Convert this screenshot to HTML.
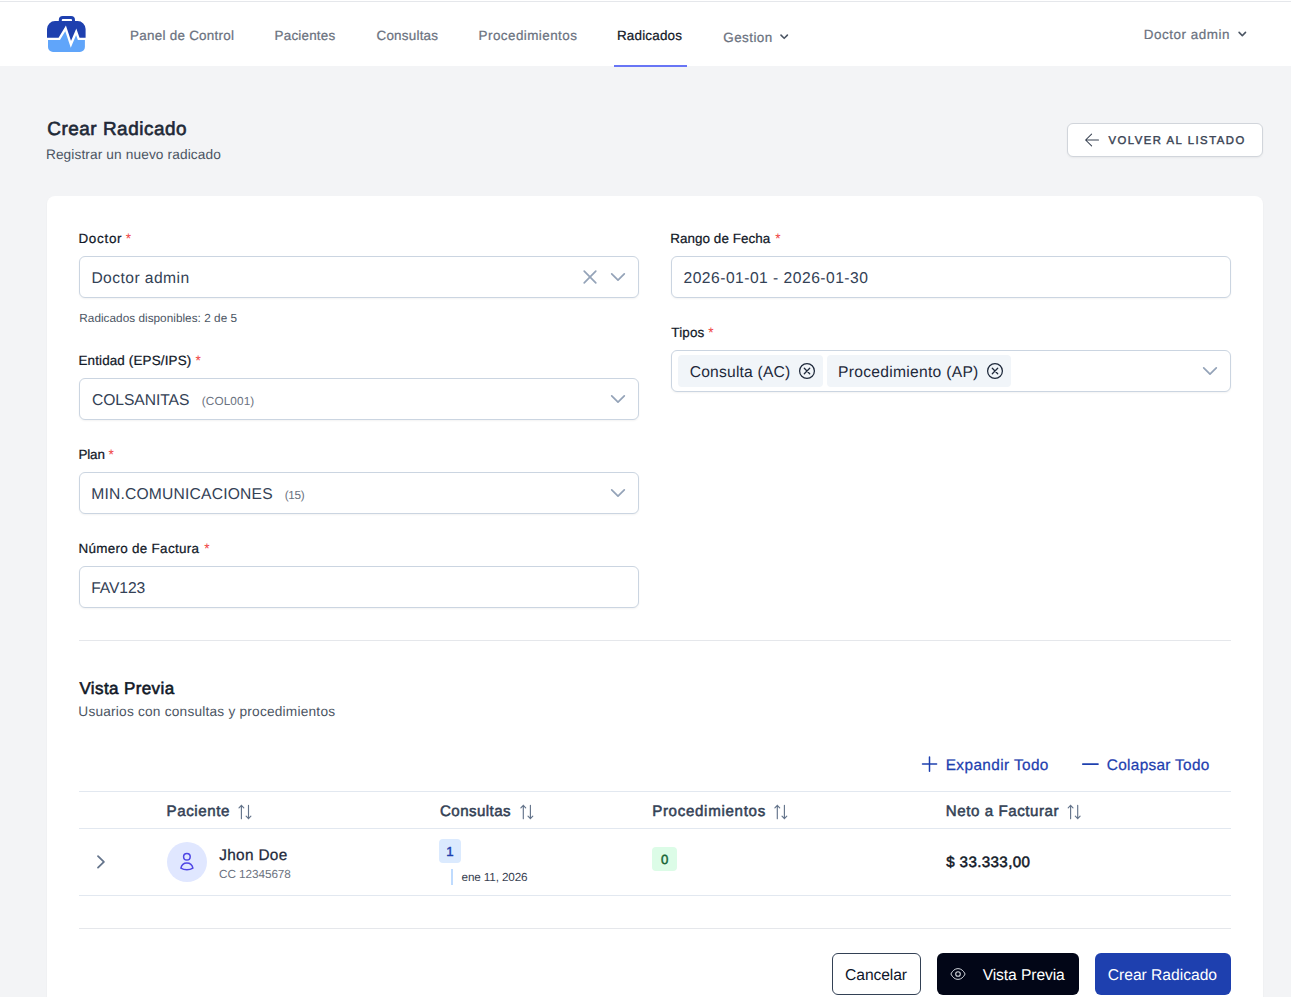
<!DOCTYPE html>
<html lang="es">
<head>
<meta charset="utf-8">
<title>Crear Radicado</title>
<style>
*{box-sizing:border-box;margin:0;padding:0}
html,body{width:1291px;height:997px;overflow:hidden;background:#f3f4f6;font-family:"Liberation Sans",sans-serif}
#root{position:relative;width:1291px;height:997px;overflow:hidden}
.a{position:absolute}
.t{position:absolute;white-space:pre;text-rendering:geometricPrecision}
.inp{position:absolute;height:42px;width:560px;background:#fff;border:1px solid #cbd5e1;border-radius:6px;box-shadow:0 1px 2px 0 rgba(18,18,23,.05)}
.hr{position:absolute;height:1px;left:79px;width:1152px}
svg{position:absolute;overflow:visible}
</style>
</head>
<body>
<div id="root">
<div class="a" style="left:0;top:0;width:1291px;height:66px;background:#fff"></div>
<div class="a" style="left:0;top:1px;width:1291px;height:1px;background:#e5e7eb"></div>
<div class="a" style="left:614px;top:65px;width:73px;height:2px;background:#6875f5"></div>
<div class="a" style="left:47px;top:196px;width:1216px;height:820px;background:#fff;border-radius:8px;box-shadow:0 1px 2px 0 rgba(0,0,0,.05)"></div>
<div class="a" style="left:1067px;top:123px;width:196px;height:34px;background:#fff;border:1px solid #d1d5db;border-radius:6px;box-shadow:0 1px 2px 0 rgba(0,0,0,.05)"></div>
<div class="inp" style="left:79px;top:256px"></div>
<div class="inp" style="left:79px;top:378px"></div>
<div class="inp" style="left:79px;top:472px"></div>
<div class="inp" style="left:79px;top:566px"></div>
<div class="inp" style="left:671px;top:256px"></div>
<div class="inp" style="left:671px;top:350px"></div>
<div class="a" style="left:678px;top:355px;width:145px;height:32px;background:#f1f5f9;border-radius:4px"></div>
<div class="a" style="left:827px;top:355px;width:184px;height:32px;background:#f1f5f9;border-radius:4px"></div>
<div class="hr" style="top:640px;background:#e5e7eb"></div>
<div class="hr" style="top:791px;background:#e2e8f0"></div>
<div class="hr" style="top:828px;background:#e2e8f0"></div>
<div class="hr" style="top:895px;background:#e2e8f0"></div>
<div class="hr" style="top:928px;background:#e5e7eb"></div>
<div class="a" style="left:167px;top:842px;width:40px;height:40px;border-radius:50%;background:#e0e7ff"></div>
<div class="a" style="left:439px;top:839px;width:22px;height:24px;border-radius:4px;background:#dbeafe"></div>
<div class="a" style="left:451px;top:869px;width:2px;height:16px;background:#bfdbfe"></div>
<div class="a" style="left:652px;top:847px;width:25px;height:24px;border-radius:4px;background:#dcfce7"></div>
<div class="a" style="left:832px;top:953px;width:89px;height:42px;border:1px solid #334155;border-radius:6px;background:#fff"></div>
<div class="a" style="left:937px;top:953px;width:142px;height:42px;border-radius:6px;background:#020617"></div>
<div class="a" style="left:1095px;top:953px;width:136px;height:42px;border-radius:6px;background:#1e40af"></div>

<svg class="a" style="left:0;top:0" width="1291" height="997" viewBox="0 0 1291 997">
<g>
<path d="M47 38.9V29.1a8 8 0 0 1 8-8H77.6a8 8 0 0 1 8 8V38.9H78.7L76.2 31.8L70.9 44.3L65.6 28.3L59.3 38.9Z" fill="#1e40af"/>
<path d="M48 38.9H59.3L65.6 28.3L70.9 44.3L76.2 31.8L78.7 38.9H84.9V46.9a5 5 0 0 1-5 5H53a5 5 0 0 1-5-5Z" fill="#60a5fa"/>
<path d="M46.5 38.9H59.3L65.6 28.3L70.9 44.3L76.2 31.8L78.7 38.9H86.2" fill="none" stroke="#fff" stroke-width="2.4" stroke-linejoin="miter" stroke-miterlimit="10"/>
<path d="M60.3 22V20.05a2.5 2.5 0 0 1 2.5-2.5H71a2.5 2.5 0 0 1 2.5 2.5V22" fill="none" stroke="#1e40af" stroke-width="3"/>
</g>
<svg x="776.2" y="28.7" width="16" height="16" viewBox="0 0 20 20"><path fill="#4b5563" fill-rule="evenodd" d="M5.293 7.293a1 1 0 011.414 0L10 10.586l3.293-3.293a1 1 0 111.414 1.414l-4 4a1 1 0 01-1.414 0l-4-4a1 1 0 010-1.414z" clip-rule="evenodd"/></svg>
<svg x="1234.3" y="26.0" width="16" height="16" viewBox="0 0 20 20"><path fill="#4b5563" fill-rule="evenodd" d="M5.293 7.293a1 1 0 011.414 0L10 10.586l3.293-3.293a1 1 0 111.414 1.414l-4 4a1 1 0 01-1.414 0l-4-4a1 1 0 010-1.414z" clip-rule="evenodd"/></svg>
<path d="M1098.5 140H1085.6M1091.6 134.1L1085.6 140L1091.6 145.9" fill="none" stroke="#374151" stroke-width="1.05" stroke-linecap="round" stroke-linejoin="round"/>
<path d="M584.2 271.2L595.8 282.8M595.8 271.2L584.2 282.8" stroke="#94a3b8" stroke-width="1.7" stroke-linecap="round"/>
<path d="M611.70 273.80L618.00 280.10L624.30 273.80" fill="none" stroke="#94a3b8" stroke-width="1.7" stroke-linecap="round" stroke-linejoin="round"/>
<path d="M611.70 395.80L618.00 402.10L624.30 395.80" fill="none" stroke="#94a3b8" stroke-width="1.7" stroke-linecap="round" stroke-linejoin="round"/>
<path d="M611.70 489.80L618.00 496.10L624.30 489.80" fill="none" stroke="#94a3b8" stroke-width="1.7" stroke-linecap="round" stroke-linejoin="round"/>
<path d="M1203.70 367.80L1210.00 374.10L1216.30 367.80" fill="none" stroke="#94a3b8" stroke-width="1.7" stroke-linecap="round" stroke-linejoin="round"/>
<circle cx="807" cy="371" r="7.4" fill="none" stroke="#1e293b" stroke-width="1.25"/><path d="M804.3 368.3L809.7 373.7M809.7 368.3L804.3 373.7" stroke="#1e293b" stroke-width="1.3" stroke-linecap="round"/>
<circle cx="995" cy="371" r="7.4" fill="none" stroke="#1e293b" stroke-width="1.25"/><path d="M992.3 368.3L997.7 373.7M997.7 368.3L992.3 373.7" stroke="#1e293b" stroke-width="1.3" stroke-linecap="round"/>
<path d="M922.5 764.1H936.6M929.5 757V771.2" stroke="#1e40af" stroke-width="1.5" stroke-linecap="round"/>
<path d="M1082.8 764.1H1098" stroke="#1e40af" stroke-width="1.7" stroke-linecap="round"/>
<path d="M241.40 818.70V805.30M239.00 807.80L241.40 805.30L243.80 807.80M248.50 805.30V818.70M246.10 816.20L248.50 818.70L250.90 816.20" fill="none" stroke="#64748b" stroke-width="1.15" stroke-linecap="round" stroke-linejoin="round"/>
<path d="M523.30 818.70V805.30M520.90 807.80L523.30 805.30L525.70 807.80M530.40 805.30V818.70M528.00 816.20L530.40 818.70L532.80 816.20" fill="none" stroke="#64748b" stroke-width="1.15" stroke-linecap="round" stroke-linejoin="round"/>
<path d="M777.30 818.70V805.30M774.90 807.80L777.30 805.30L779.70 807.80M784.40 805.30V818.70M782.00 816.20L784.40 818.70L786.80 816.20" fill="none" stroke="#64748b" stroke-width="1.15" stroke-linecap="round" stroke-linejoin="round"/>
<path d="M1070.60 818.70V805.30M1068.20 807.80L1070.60 805.30L1073.00 807.80M1077.70 805.30V818.70M1075.30 816.20L1077.70 818.70L1080.10 816.20" fill="none" stroke="#64748b" stroke-width="1.15" stroke-linecap="round" stroke-linejoin="round"/>
<path d="M98 856.2L103.9 861.9L98 867.6" fill="none" stroke="#64748b" stroke-width="1.8" stroke-linecap="round" stroke-linejoin="round"/>
<circle cx="186.9" cy="856.8" r="3.3" fill="none" stroke="#4f46e5" stroke-width="1.5"/>
<path d="M180.9 868.1C181.6 864.6 184 862.9 186.9 862.9S192.2 864.6 192.9 868.1C191 869.3 189 869.8 186.9 869.8S182.8 869.3 180.9 868.1Z" fill="none" stroke="#4f46e5" stroke-width="1.5" stroke-linejoin="round"/>
<path d="M950.9 974C952.4 970.8 954.9 968.6 958 968.6S963.6 970.8 965.1 974C963.6 977.2 961.1 979.4 958 979.4S952.4 977.2 950.9 974Z" fill="none" stroke="#d1d5db" stroke-width="1.0" stroke-linejoin="round"/>
<circle cx="958" cy="974" r="2.3" fill="none" stroke="#d1d5db" stroke-width="1.1"/>
</svg>

<span class="t" style="left:130.12px;top:26px;font-size:13.44px;line-height:20px;color:#6b7280;letter-spacing:0.250px;-webkit-text-stroke:0.23px #6b7280;">Panel de Control</span>
<span class="t" style="left:274.62px;top:26px;font-size:13.44px;line-height:20px;color:#6b7280;letter-spacing:0.185px;-webkit-text-stroke:0.23px #6b7280;">Pacientes</span>
<span class="t" style="left:376.51px;top:26px;font-size:13.44px;line-height:20px;color:#6b7280;letter-spacing:0.217px;-webkit-text-stroke:0.23px #6b7280;">Consultas</span>
<span class="t" style="left:478.62px;top:26px;font-size:13.44px;line-height:20px;color:#6b7280;letter-spacing:0.437px;-webkit-text-stroke:0.23px #6b7280;">Procedimientos</span>
<span class="t" style="left:616.91px;top:26px;font-size:13.44px;line-height:20px;color:#111827;letter-spacing:0.199px;-webkit-text-stroke:0.23px #111827;">Radicados</span>
<span class="t" style="left:723.32px;top:28px;font-size:13.44px;line-height:20px;color:#6b7280;letter-spacing:0.422px;-webkit-text-stroke:0.23px #6b7280;">Gestion</span>
<span class="t" style="left:1143.82px;top:25px;font-size:13.44px;line-height:20px;color:#6b7280;letter-spacing:0.512px;-webkit-text-stroke:0.23px #6b7280;">Doctor admin</span>
<span class="t" style="left:47.22px;top:116px;font-size:18.9px;line-height:28px;color:#1f2937;letter-spacing:0.536px;-webkit-text-stroke:0.64px #1f2937;">Crear Radicado</span>
<span class="t" style="left:45.90px;top:144px;font-size:13.69px;line-height:21px;color:#4b5563;letter-spacing:0.114px;">Registrar un nuevo radicado</span>
<span class="t" style="left:1108.39px;top:133px;font-size:11.34px;line-height:17px;color:#374151;letter-spacing:1.504px;-webkit-text-stroke:0.39px #374151;">VOLVER AL LISTADO</span>
<span class="t" style="left:78.41px;top:229px;font-size:13.44px;line-height:20px;color:#111827;letter-spacing:0.713px;-webkit-text-stroke:0.23px #111827;">Doctor</span>
<span class="t" style="left:125.65px;top:228px;font-size:13.69px;line-height:21px;color:#ef4444;">*</span>
<span class="t" style="left:91.40px;top:267px;font-size:15.65px;line-height:23px;color:#334155;letter-spacing:0.426px;">Doctor admin</span>
<span class="t" style="left:79.30px;top:310px;font-size:11.74px;line-height:18px;color:#4b5563;letter-spacing:0.042px;">Radicados disponibles: 2 de 5</span>
<span class="t" style="left:78.41px;top:351px;font-size:13.44px;line-height:20px;color:#111827;letter-spacing:0.144px;-webkit-text-stroke:0.23px #111827;">Entidad (EPS/IPS)</span>
<span class="t" style="left:195.40px;top:350px;font-size:13.69px;line-height:21px;color:#ef4444;">*</span>
<span class="t" style="left:91.90px;top:389px;font-size:15.65px;line-height:23px;color:#334155;letter-spacing:-0.054px;">COLSANITAS</span>
<span class="t" style="left:201.80px;top:393px;font-size:11.74px;line-height:18px;color:#6b7280;letter-spacing:0.127px;">(COL001)</span>
<span class="t" style="left:78.41px;top:445px;font-size:13.44px;line-height:20px;color:#111827;letter-spacing:-0.117px;-webkit-text-stroke:0.23px #111827;">Plan</span>
<span class="t" style="left:108.40px;top:444px;font-size:13.69px;line-height:21px;color:#ef4444;">*</span>
<span class="t" style="left:91.20px;top:483px;font-size:15.65px;line-height:23px;color:#334155;letter-spacing:0.194px;">MIN.COMUNICACIONES</span>
<span class="t" style="left:284.80px;top:487px;font-size:11.74px;line-height:18px;color:#6b7280;letter-spacing:-0.353px;">(15)</span>
<span class="t" style="left:78.41px;top:539px;font-size:13.44px;line-height:20px;color:#111827;letter-spacing:0.299px;-webkit-text-stroke:0.23px #111827;">Número de Factura</span>
<span class="t" style="left:204.25px;top:538px;font-size:13.69px;line-height:21px;color:#ef4444;">*</span>
<span class="t" style="left:91.20px;top:577px;font-size:15.65px;line-height:23px;color:#334155;letter-spacing:-0.098px;">FAV123</span>
<span class="t" style="left:670.32px;top:229px;font-size:13.44px;line-height:20px;color:#111827;letter-spacing:0.037px;-webkit-text-stroke:0.23px #111827;">Rango de Fecha</span>
<span class="t" style="left:775.25px;top:228px;font-size:13.69px;line-height:21px;color:#ef4444;">*</span>
<span class="t" style="left:683.50px;top:267px;font-size:15.65px;line-height:23px;color:#334155;letter-spacing:0.477px;">2026-01-01 - 2026-01-30</span>
<span class="t" style="left:671.32px;top:323px;font-size:13.44px;line-height:20px;color:#111827;letter-spacing:0.132px;-webkit-text-stroke:0.23px #111827;">Tipos</span>
<span class="t" style="left:708.30px;top:322px;font-size:13.69px;line-height:21px;color:#ef4444;">*</span>
<span class="t" style="left:689.70px;top:361px;font-size:15.65px;line-height:23px;color:#1e293b;letter-spacing:0.199px;">Consulta (AC)</span>
<span class="t" style="left:838.00px;top:361px;font-size:15.65px;line-height:23px;color:#1e293b;letter-spacing:0.277px;">Procedimiento (AP)</span>
<span class="t" style="left:79.39px;top:676px;font-size:17.01px;line-height:26px;color:#111827;letter-spacing:0.398px;-webkit-text-stroke:0.58px #111827;">Vista Previa</span>
<span class="t" style="left:78.30px;top:701px;font-size:13.69px;line-height:21px;color:#4b5563;letter-spacing:0.210px;">Usuarios con consultas y procedimientos</span>
<span class="t" style="left:945.73px;top:754px;font-size:15.36px;line-height:23px;color:#1e40af;letter-spacing:0.397px;-webkit-text-stroke:0.26px #1e40af;">Expandir Todo</span>
<span class="t" style="left:1106.83px;top:754px;font-size:15.36px;line-height:23px;color:#1e40af;letter-spacing:0.310px;-webkit-text-stroke:0.26px #1e40af;">Colapsar Todo</span>
<span class="t" style="left:166.56px;top:800px;font-size:15.12px;line-height:23px;color:#334155;letter-spacing:0.585px;-webkit-text-stroke:0.51px #334155;">Paciente</span>
<span class="t" style="left:440.06px;top:800px;font-size:15.12px;line-height:23px;color:#334155;letter-spacing:0.407px;-webkit-text-stroke:0.51px #334155;">Consultas</span>
<span class="t" style="left:652.15px;top:800px;font-size:15.12px;line-height:23px;color:#334155;letter-spacing:0.685px;-webkit-text-stroke:0.51px #334155;">Procedimientos</span>
<span class="t" style="left:945.86px;top:800px;font-size:15.12px;line-height:23px;color:#334155;letter-spacing:0.554px;-webkit-text-stroke:0.51px #334155;">Neto a Facturar</span>
<span class="t" style="left:219.23px;top:844px;font-size:15.36px;line-height:23px;color:#1e293b;letter-spacing:0.319px;-webkit-text-stroke:0.26px #1e293b;">Jhon Doe</span>
<span class="t" style="left:219.10px;top:866px;font-size:11.74px;line-height:18px;color:#6b7280;letter-spacing:-0.069px;">CC 12345678</span>
<span class="t" style="left:446.25px;top:842px;font-size:13.23px;line-height:20px;color:#1e40af;-webkit-text-stroke:0.45px #1e40af;">1</span>
<span class="t" style="left:461.60px;top:869px;font-size:11.74px;line-height:18px;color:#374151;letter-spacing:-0.147px;">ene 11, 2026</span>
<span class="t" style="left:660.95px;top:850px;font-size:13.23px;line-height:20px;color:#166534;-webkit-text-stroke:0.45px #166534;">0</span>
<span class="t" style="left:946.25px;top:851px;font-size:15.12px;line-height:23px;color:#111827;letter-spacing:0.387px;-webkit-text-stroke:0.51px #111827;">$ 33.333,00</span>
<span class="t" style="left:845.10px;top:964px;font-size:15.65px;line-height:23px;color:#0f172a;letter-spacing:-0.098px;">Cancelar</span>
<span class="t" style="left:982.70px;top:964px;font-size:15.65px;line-height:23px;color:#ffffff;letter-spacing:-0.097px;">Vista Previa</span>
<span class="t" style="left:1107.80px;top:964px;font-size:15.65px;line-height:23px;color:#ffffff;letter-spacing:-0.026px;">Crear Radicado</span>
</div>
</body>
</html>
